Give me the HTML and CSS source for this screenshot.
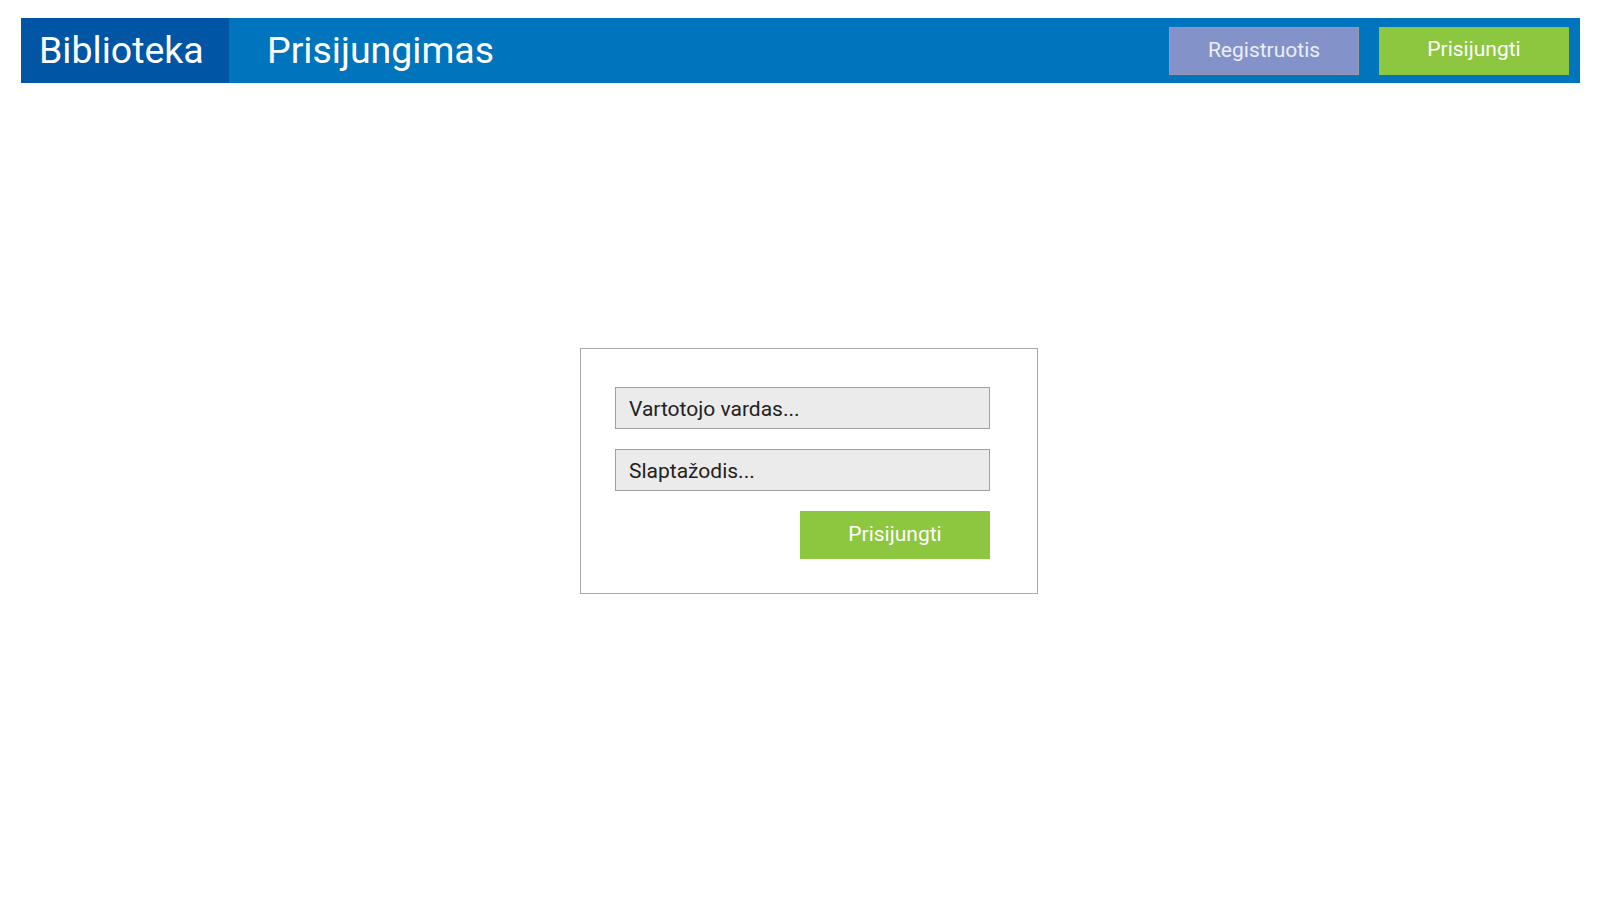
FILE: index.html
```html
<!DOCTYPE html>
<html lang="lt">
<head>
<meta charset="utf-8">
<title>Prisijungimas</title>
<link rel="stylesheet" href="styles.css">
</head>
<body>
<header class="topbar">
  <div class="brand">Biblioteka</div>
  <div class="page-title">Prisijungimas</div>
  <nav class="actions">
    <button class="btn btn-register">Registruotis</button>
    <button class="btn btn-login btn-login-top">Prisijungti</button>
  </nav>
</header>
<main class="main">
  <form class="login-box">
    <input class="field" type="text" placeholder="Vartotojo vardas...">
    <input class="field" type="password" placeholder="Slaptažodis...">
    <div class="form-actions">
      <button class="btn btn-login" type="button">Prisijungti</button>
    </div>
  </form>
</main>
</body>
</html>
```
FILE: styles.css
```css
* { box-sizing: border-box; }
html, body { margin: 0; padding: 0; background: #ffffff; }
body { font-family: Roboto, "Liberation Sans", sans-serif; }

.topbar {
  display: flex;
  align-items: center;
  height: 65px;
  margin: 18px 20px 0 21px;
  background: #0074bd;
  color: #ffffff;
}
.brand {
  width: 208px;
  height: 100%;
  display: flex;
  align-items: center;
  padding: 0 0 2px 18px;
  background: #0055a5;
  font-size: 37.5px;
}
.page-title {
  margin-left: 38px;
  padding-bottom: 2px;
  font-size: 37.5px;
}
.actions {
  margin-left: auto;
  display: flex;
  gap: 20px;
  padding-right: 11px;
}
.btn {
  width: 190px;
  height: 48px;
  border: none;
  font-family: Roboto, "Liberation Sans", sans-serif;
  font-size: 21px;
  color: #ffffff;
  padding: 0 0 2px;
  cursor: pointer;
}
.btn-register {
  background: #8393c9;
  border: 1px solid #9a9aa6;
  color: #eceef6;
}
.btn-login {
  background: #8dc63f;
}
.btn-login-top {
  padding-bottom: 4px;
}

.main {
  padding: 265px 0 0 580px;
}
.login-box {
  width: 458px;
  height: 246px;
  border: 1px solid #a9a9a9;
  padding: 38px 47px 0 34px;
  display: flex;
  flex-direction: column;
  gap: 20px;
}
.field {
  width: 375px;
  height: 42px;
  margin: 0;
  border: 1px solid #a0a0a0;
  background: #ebebeb;
  padding: 2px 0 0 13px;
  font-family: Roboto, "Liberation Sans", sans-serif;
  font-size: 21px;
  color: #222222;
  outline: none;
}
.field::placeholder { color: #222222; opacity: 1; }
.form-actions {
  display: flex;
  justify-content: flex-end;
}
```
